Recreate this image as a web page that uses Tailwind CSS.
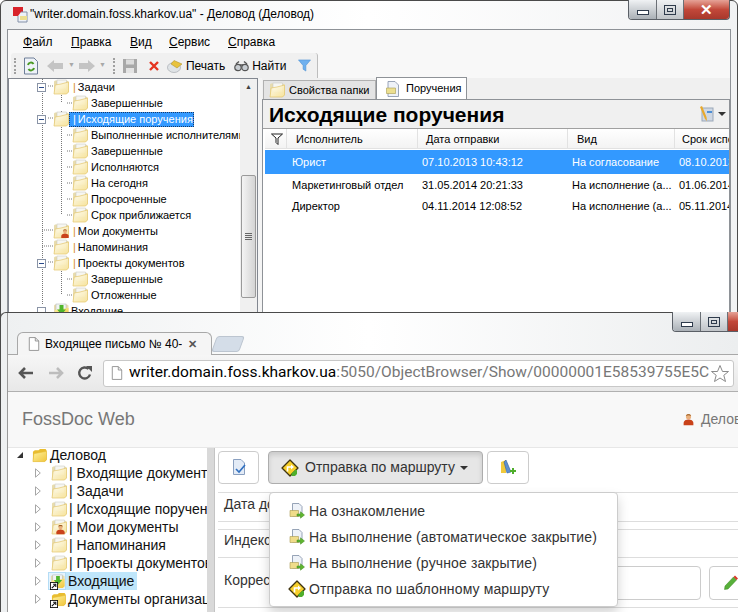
<!DOCTYPE html>
<html lang="ru">
<head>
<meta charset="UTF-8">
<title>Деловод</title>
<script src="https://cdn.jsdelivr.net/npm/@tailwindcss/browser@4"></script>
</head>
<body class="w-[738px] h-[612px] overflow-hidden relative bg-white font-['Liberation_Sans',sans-serif] text-black">

<svg width="0" height="0" class="absolute">
  <defs>
    <linearGradient id="fy" x1="0" y1="0" x2="1" y2="1"><stop offset="0" stop-color="#fff3a0"/><stop offset="1" stop-color="#f0c53c"/></linearGradient>
    <linearGradient id="fp" x1="0" y1="0" x2="1" y2="1"><stop offset="0" stop-color="#fffdf0"/><stop offset="1" stop-color="#f8e49a"/></linearGradient>
    <symbol id="folder" viewBox="0 0 16 16">
      <path d="M1 14.500V2.500L2 1.500H14L15.500 2.500V13L14 14.500Z" fill="#e8dcae"/>
      <rect x="4" y="1" width="9.500" height="9" fill="#f6f6f2" stroke="#c4c4bc" stroke-width=".5"/>
      <path d="M1 15L2.200 6L8 5L15.500 3V13L13.500 15Z" fill="url(#fp)" stroke="#e4c66a" stroke-width=".7" fill-opacity=".9"/>
    </symbol>
    <symbol id="folder-in" viewBox="0 0 16 16">
      <path d="M1 14.500V2.500L2 1.500H14L15.500 2.500V13L14 14.500Z" fill="#e8dcae"/>
      <rect x="3" y="1" width="10" height="9" fill="#f2f4f4" stroke="#a8b0b0" stroke-width=".5"/>
      <path d="M1 15L2.200 7L15.500 5V13L13.500 15Z" fill="url(#fy)"/>
      <path d="M6.500 2H10.500V6.500H13L8.500 11.500L4 6.500H6.500Z" fill="#4fb52c"/>
    </symbol>
    <symbol id="folder-solid" viewBox="0 0 16 16">
      <path d="M1 14.500V4L3 2.500H7L8.500 1H14.500L15.500 2.500V12.500L14 14.500Z" fill="#e9bd2f"/>
      <path d="M1 14.500L2 6L15.500 3.500V12.500L13.500 14.500Z" fill="url(#fy)" stroke="#e6bb34" stroke-width=".6"/>
    </symbol>
    <symbol id="person" viewBox="0 0 16 16">
      <circle cx="8" cy="4.500" r="3.200" fill="#eab07c"/>
      <path d="M4.800 3.500C5 1 11 1 11.200 3.500C9.500 2.500 6.500 2.500 4.800 3.500Z" fill="#9a5a1e"/>
      <path d="M2 15V12C2 9.500 5 8 8 8S14 9.500 14 12V15Z" fill="#c9421a"/>
    </symbol>
    <symbol id="route" viewBox="0 0 18 18">
      <path d="M9 1L17 9L9 17L1 9Z" fill="#f7cf2a" stroke="#3f3410" stroke-width="1.300" stroke-linejoin="round"/>
      <path d="M6.500 12.500V8H10.500" fill="none" stroke="#fff" stroke-width="1.600"/>
      <path d="M10 5.500L13 8L10 10.500Z" fill="#fff"/>
      <path d="M10.500 14.500L14.500 10.500L16 11.500V15L14 17H10.500Z" fill="#4fae2c"/>
    </symbol>
    <symbol id="send" viewBox="0 0 16 16">
      <path d="M3.500 .5H10L13 3.500V13H3.500Z" fill="#eef2f8" stroke="#7f8ea6" stroke-width=".8"/>
      <path d="M1 7.500H9.500V13.500H1Z" fill="#f0dc8a" stroke="#a8984e" stroke-width=".6"/>
      <path d="M8 11H11.500V8.800L15.500 12L11.500 15.200V13H8Z" fill="#5fb52f" stroke="#3f8a1c" stroke-width=".5"/>
    </symbol>
    <symbol id="page" viewBox="0 0 14 16">
      <path d="M1.500 .5H8.500L12.500 4.500V15.500H1.500ZM8.500 .5V4.500H12.500" fill="#fff" stroke="#8a8a8a" stroke-width="1"/>
    </symbol>
    <symbol id="funnel" viewBox="0 0 14 14">
      <path d="M.5 1H13.500L8.500 7V13L5.500 11V7Z" fill="#6fb0ee" stroke="#4a8fd4" stroke-width=".6"/>
    </symbol>
    <symbol id="shortcut" viewBox="0 0 9 9">
      <rect x=".5" y=".5" width="8" height="8" fill="#fff" stroke="#111" stroke-width="1"/>
      <path d="M2 7L5.500 3.500M3.500 2.500H6.500V5.500" fill="none" stroke="#111" stroke-width="1.200"/>
    </symbol>
    <symbol id="doc-small" viewBox="0 0 16 16">
      <path d="M3 .5H10L13.500 4V15.500H3Z" fill="#eef2f8" stroke="#8391a8" stroke-width=".8"/>
      <path d="M1.500 7H10.500V12.500H1.500Z" fill="#ecdf90" stroke="#a89c50" stroke-width=".6"/>
    </symbol>
    <symbol id="tri" viewBox="0 0 6 10">
      <path d="M.5 .8L5.300 5L.5 9.200Z" fill="#fff" stroke="#a6a6a6"/>
    </symbol>
  </defs>
</svg>

<!-- окно приложения -->
<div class="absolute left-0 top-0 w-[738px] h-[320px] rounded-t-md border border-[#4a4a4a] bg-gradient-to-r from-[#eef0f1] via-white to-[#f1f2f3] text-[11px]">
  <div class="h-[28px] flex items-center pl-[12px] gap-px text-[12px]">
    <svg width="16" height="16" viewBox="0 0 16 16"><rect x="0" y="0" width="10" height="9" fill="#d8232a"/><path d="M8 5H14V15H5V9" fill="#eef2f8" stroke="#8391a8"/><rect x="7" y="9" width="7" height="4" fill="#ecdf90"/></svg>
    <span class="-mt-[3px]">"writer.domain.foss.kharkov.ua" - Деловод (Деловод)</span>
  </div>
  <div class="absolute right-[7px] -top-px flex h-[20px] w-[102px] rounded-b-[4px] overflow-hidden border border-t-0 border-[#5a5f66]">
    <div class="w-[28px] flex items-center justify-center border-r border-[#6b7076] bg-gradient-to-b from-[#f0f2f4] to-[#aab0b6]"><div class="w-[12px] h-[5px] mt-[5px] border border-[#2f3b4c] bg-white"></div></div>
    <div class="w-[27px] flex items-center justify-center border-r border-[#6b7076] bg-gradient-to-b from-[#f0f2f4] to-[#c0c4c8]"><div class="w-[12px] h-[10px] border border-[#2f3b4c] flex items-center justify-center"><div class="w-[6px] h-[4px] border border-[#2f3b4c]"></div></div></div>
    <div class="flex-1 flex items-center justify-center bg-gradient-to-b from-[#e5a297] via-[#c2483a] to-[#a8382c] text-white text-[15px] font-bold leading-none">✕</div>
  </div>

  <div class="ml-[6px] mr-[6px] h-[290px] border border-[#8e9297] bg-white">
    <div class="bg-[#f8f8f8]">
      <div class="h-[23px] flex items-center text-[12px] pl-[15px] pt-px">
        <span class="w-[48px]"><u>Ф</u>айл</span>
        <span class="w-[59px]"><u>П</u>равка</span>
        <span class="w-[39px]"><u>В</u>ид</span>
        <span class="w-[59px]"><u>С</u>ервис</span>
        <span><u>С</u>правка</span>
      </div>
      <div class="h-[25px] flex items-center">
        <div class="ml-[3px] w-[307px] h-[25px] rounded-t-[3px] bg-[#f0f0f0] border-r border-[#bdbdbd] flex items-center text-[12px]">
          <div class="w-[3px] h-[16px] ml-[3px] border-l-2 border-dotted border-[#a0a0a0]"></div>
          <svg class="ml-[6px]" width="16" height="18" viewBox="0 0 16 18"><path d="M1.500 1H11L14.500 4.500V17H1.500Z" fill="#eef2f8" stroke="#6f7f98"/><path d="M5 8A3 3 0 0 1 10.500 7M11 11A3 3 0 0 1 5.500 12" fill="none" stroke="#4a9a24" stroke-width="2"/></svg>
          <svg class="ml-[7px] text-[#c4c4c4]" width="18" height="14" viewBox="0 0 18 14"><path d="M8 1V4H17V10H8V13L1 7Z" fill="currentColor"/></svg>
          <span class="ml-[4px] text-[#a8a8a8] text-[7px]">▼</span>
          <svg class="ml-[3px] text-[#c4c4c4]" width="18" height="14" viewBox="0 0 18 14"><path d="M10 1V4H1V10H10V13L17 7Z" fill="currentColor"/></svg>
          <span class="ml-[3px] text-[#a8a8a8] text-[7px]">▼</span>
          <div class="w-[3px] h-[16px] ml-[7px] border-l-2 border-dotted border-[#a0a0a0]"></div>
          <svg class="ml-[6px]" width="16" height="16" viewBox="0 0 16 16"><path d="M1 1H15V15H1Z" fill="#a8a8a8"/><rect x="4" y="1.500" width="8" height="5" fill="#dcdcdc"/><rect x="4" y="10" width="8" height="5" fill="#e4e4e4"/></svg>
          <svg class="ml-[10px]" width="12" height="12" viewBox="0 0 12 12"><path d="M2 2L10 10M10 2L2 10" stroke="#e5331f" stroke-width="2.400"/></svg>
          <svg class="ml-[7px]" width="16" height="14" viewBox="0 0 16 14"><ellipse cx="7" cy="8.500" rx="6.500" ry="5" fill="#dfe3e6" stroke="#9aa0a6" stroke-width=".6"/><path d="M4 5L7 1.500L15 5L10 9Z" fill="#e8c23c" stroke="#a88a20" stroke-width=".5"/></svg>
          <span class="ml-[3px]">Печать</span>
          <svg class="ml-[9px]" width="15" height="12" viewBox="0 0 15 12"><circle cx="4" cy="7.500" r="3.200" fill="#c8cdd2" stroke="#555" stroke-width="1.200"/><circle cx="11" cy="7.500" r="3.200" fill="#c8cdd2" stroke="#555" stroke-width="1.200"/><path d="M2 4L5 1.500M13 4L10 1.500M6 5H9" stroke="#555" stroke-width="1.400"/></svg>
          <span class="ml-[3px]">Найти</span>
          <svg class="ml-[12px]" width="13" height="13"><use href="#funnel"/></svg>
        </div>
      </div>
    </div>

    <div class="flex h-[240px] bg-[#f4f4f4]">
      <!-- дерево -->
      <div class="relative w-[250px] h-full border border-[#828790] bg-white flex">
        <svg class="absolute left-0 top-0" width="232" height="240">
          <path d="M33.500 0V225M52.500 16V24M52.500 32V135M52.500 192V216" stroke="#777" stroke-dasharray="1 1" fill="none"/>
          <path d="M39 7H44M39 39H44M39 183H44M33 151H44M33 167H44M58 24H64M58 56H64M58 72H64M58 88H64M58 104H64M58 120H64M58 136H64M58 200H64M58 216H64" stroke="#777" stroke-dasharray="1 1" fill="none"/>
        </svg>
        <div class="w-[232px] pl-[28px] overflow-hidden relative">
          <div class="h-[16px] flex items-center"><div class="w-[9px] h-[9px] border border-[#8a94a6] bg-white flex items-center justify-center"><div class="w-[5px] h-px bg-[#2a4a8a]"></div></div><svg class="ml-[7px]" width="16" height="16"><use href="#folder"/></svg><span class="ml-[4px] text-[#d98a2b]">|</span><span class="ml-[2px]">Задачи</span></div>
          <div class="h-[16px] flex items-center pl-[35px]"><svg width="16" height="16"><use href="#folder"/></svg><span class="ml-[3px]">Завершенные</span></div>
          <div class="h-[16px] flex items-center"><div class="w-[9px] h-[9px] border border-[#8a94a6] bg-white flex items-center justify-center"><div class="w-[5px] h-px bg-[#2a4a8a]"></div></div><svg class="ml-[7px]" width="16" height="16"><use href="#folder"/></svg><span class="bg-[#3399ff] text-white h-[15px] leading-[13px] w-[125px] pl-[3px] border border-dotted border-[#1a3a66] whitespace-nowrap"><span class="mr-[2px]">|</span>Исходящие поручения</span></div>
          <div class="h-[16px] flex items-center pl-[35px]"><svg class="shrink-0" width="16" height="16"><use href="#folder"/></svg><span class="ml-[3px] whitespace-nowrap">Выполненные исполнителями</span></div>
          <div class="h-[16px] flex items-center pl-[35px]"><svg width="16" height="16"><use href="#folder"/></svg><span class="ml-[3px]">Завершенные</span></div>
          <div class="h-[16px] flex items-center pl-[35px]"><svg width="16" height="16"><use href="#folder"/></svg><span class="ml-[3px]">Исполняются</span></div>
          <div class="h-[16px] flex items-center pl-[35px]"><svg width="16" height="16"><use href="#folder"/></svg><span class="ml-[3px]">На сегодня</span></div>
          <div class="h-[16px] flex items-center pl-[35px]"><svg width="16" height="16"><use href="#folder"/></svg><span class="ml-[3px]">Просроченные</span></div>
          <div class="h-[16px] flex items-center pl-[35px]"><svg width="16" height="16"><use href="#folder"/></svg><span class="ml-[3px]">Срок приближается</span></div>
          <div class="h-[16px] flex items-center pl-[16px] relative"><svg width="16" height="16"><use href="#folder"/></svg><svg class="absolute left-[23px] top-[5px]" width="10" height="11"><use href="#person"/></svg><span class="ml-[4px] text-[#d98a2b]">|</span><span class="ml-[2px]">Мои документы</span></div>
          <div class="h-[16px] flex items-center pl-[16px]"><svg width="16" height="16"><use href="#folder"/></svg><span class="ml-[4px] text-[#d98a2b]">|</span><span class="ml-[2px]">Напоминания</span></div>
          <div class="h-[16px] flex items-center"><div class="w-[9px] h-[9px] border border-[#8a94a6] bg-white flex items-center justify-center"><div class="w-[5px] h-px bg-[#2a4a8a]"></div></div><svg class="ml-[7px]" width="16" height="16"><use href="#folder"/></svg><span class="ml-[4px] text-[#d98a2b]">|</span><span class="ml-[2px]">Проекты документов</span></div>
          <div class="h-[16px] flex items-center pl-[35px]"><svg width="16" height="16"><use href="#folder"/></svg><span class="ml-[3px]">Завершенные</span></div>
          <div class="h-[16px] flex items-center pl-[35px]"><svg width="16" height="16"><use href="#folder"/></svg><span class="ml-[3px]">Отложенные</span></div>
          <div class="h-[16px] flex items-center"><div class="w-[9px] h-[9px] border border-[#8a94a6] bg-white"></div><svg class="ml-[7px]" width="16" height="16"><use href="#folder-in"/></svg><span class="ml-[2px]">Входящие</span></div>
        </div>
        <div class="w-[17px] bg-[#f0f0f0] flex flex-col items-center">
          <div class="h-[16px] text-[7px] leading-[16px] text-[#404040]">▲</div>
          <div class="mt-[80px] w-[15px] h-[123px] rounded-[2px] border border-[#9a9a9a] bg-gradient-to-r from-[#f4f4f4] to-[#d4d4d4] flex flex-col gap-px items-center justify-center">
            <div class="w-[7px] h-px bg-[#666]"></div><div class="w-[7px] h-px bg-[#666]"></div><div class="w-[7px] h-px bg-[#666]"></div><div class="w-[7px] h-px bg-[#666]"></div>
          </div>
        </div>
      </div>

      <!-- вкладки -->
      <div class="ml-[4px] w-[468px] flex flex-col">
        <div class="h-[21px] flex items-end bg-[#f0f0f0] pl-[1px]">
          <div class="w-[113px] h-[19px] bg-[#e4e4e4] border border-b-0 border-[#b0b0b0] flex items-center pl-[5px] gap-[4px]">
            <svg width="16" height="16"><use href="#folder"/></svg><span class="whitespace-nowrap">Свойства папки</span>
          </div>
          <div class="w-[91px] h-[22px] bg-white border border-b-0 border-[#8e9297] flex items-center pl-[8px] gap-[5px]">
            <svg width="16" height="16"><use href="#doc-small"/></svg><span>Поручения</span>
          </div>
        </div>
        <div class="flex-1 border border-[#8e9297] bg-white overflow-hidden">
          <div class="h-[29px] bg-[#f0f0f0] border-b border-[#a0a0a0] flex items-center pl-[6px] pr-[3px] justify-between">
            <span class="font-bold text-[21px] leading-none">Исходящие поручения</span>
            <div class="flex items-center gap-[4px]">
              <svg width="16" height="16" viewBox="0 0 16 16"><rect x="4" y="2" width="11" height="13" fill="#cfd8e4" stroke="#9aa7b8"/><path d="M2 1L7 13L9 15L8.500 11L4 0Z" fill="#e8a92c"/><rect x="9" y="5" width="5" height="2" fill="#4d8fd6"/></svg>
              <span class="w-0 h-0 border-x-[4px] border-x-transparent border-t-[4px] border-t-[#333]"></span>
            </div>
          </div>
          <div class="ml-[2px] h-[20px] flex items-center bg-gradient-to-b from-white to-[#f3f3f3] border-b border-[#e2e2e2] whitespace-nowrap overflow-hidden">
            <div class="w-[22px] pl-[6px] shrink-0 border-r border-[#e2e2e2] h-full flex items-center"><svg width="12" height="12" viewBox="0 0 12 12"><path d="M.5 1H11.500L7 5V11.500L5 9.500V5Z" fill="#fff" stroke="#222"/></svg></div>
            <div class="w-[131px] pl-[9px] shrink-0 border-r border-[#e2e2e2] h-full leading-[20px]">Исполнитель</div>
            <div class="w-[150px] pl-[8px] shrink-0 border-r border-[#e2e2e2] h-full leading-[20px]">Дата отправки</div>
            <div class="w-[107px] pl-[9px] shrink-0 border-r border-[#e2e2e2] h-full leading-[20px]">Вид</div>
            <div class="pl-[7px] shrink-0 h-full leading-[20px]">Срок исполнения</div>
          </div>
          <div class="ml-[2px] mt-px h-[24px] flex items-center bg-[#3399ff] text-white whitespace-nowrap overflow-hidden">
            <div class="w-[153px] pl-[27px] shrink-0">Юрист</div><div class="w-[150px] pl-[4px] shrink-0">07.10.2013 10:43:12</div><div class="w-[107px] pl-[4px] shrink-0">На согласование</div><div class="pl-[4px] shrink-0">08.10.2013</div>
          </div>
          <div class="ml-[2px] h-[22px] flex items-center whitespace-nowrap overflow-hidden">
            <div class="w-[153px] pl-[27px] shrink-0">Маркетинговый отдел</div><div class="w-[150px] pl-[4px] shrink-0">31.05.2014 20:21:33</div><div class="w-[107px] pl-[4px] shrink-0">На исполнение (а...</div><div class="pl-[4px] shrink-0">01.06.2014</div>
          </div>
          <div class="ml-[2px] h-[20px] flex items-center whitespace-nowrap overflow-hidden">
            <div class="w-[153px] pl-[27px] shrink-0">Директор</div><div class="w-[150px] pl-[4px] shrink-0">04.11.2014 12:08:52</div><div class="w-[107px] pl-[4px] shrink-0">На исполнение (а...</div><div class="pl-[4px] shrink-0">05.11.2014</div>
          </div>
        </div>
      </div>
    </div>
  </div>
</div>

<!-- окно браузера -->
<div class="absolute left-0 top-[312px] w-[738px] h-[300px] rounded-t-md border-t border-l border-[#4a4a4a] bg-gradient-to-r from-[#eef0f1] via-white to-[#eceeef]">
  <div class="absolute right-0 -top-px flex h-[20px] w-[66px] rounded-bl-[4px] overflow-hidden border-b border-l border-[#5a5f66]">
    <div class="w-[28px] flex items-center justify-center border-r border-[#6b7076] bg-gradient-to-b from-[#f0f2f4] to-[#aab0b6]"><div class="w-[12px] h-[5px] mt-[5px] border border-[#2f3b4c] bg-white"></div></div>
    <div class="w-[27px] flex items-center justify-center border-r border-[#6b7076] bg-gradient-to-b from-[#f0f2f4] to-[#c0c4c8]"><div class="w-[12px] h-[10px] border border-[#2f3b4c] flex items-center justify-center"><div class="w-[6px] h-[4px] border border-[#2f3b4c]"></div></div></div>
    <div class="flex-1 bg-gradient-to-b from-[#e5a297] via-[#c2483a] to-[#a8382c]"></div>
  </div>

  <div class="ml-[6px] h-[299px] flex flex-col border-l border-[#9a9a9a]">
    <!-- полоска вкладок -->
    <div class="h-[42px] flex items-end pl-[9px] border-b border-[#a8a8a8] relative z-0">
      <div class="w-[195px] h-[23px] -mb-px bg-[#f5f5f5] border border-b-0 border-[#a8a8a8] rounded-t-[6px] flex items-center pl-[10px] text-[12px] relative z-10">
        <svg width="12" height="14"><use href="#page"/></svg>
        <span class="ml-[5px] w-[137px] overflow-hidden whitespace-nowrap">Входящее письмо № 40-1</span>
        <span class="ml-[6px] text-[#555] font-bold text-[11px]">✕</span>
      </div>
      <div class="ml-[2px] w-[28px] h-[16px] mb-[2px] rounded-[3px] bg-[#d4dde8] border border-[#bcc5d0] -skew-x-[20deg]"></div>
    </div>
    <!-- адресная строка -->
    <div class="h-[37px] flex items-center bg-gradient-to-b from-[#f6f6f6] to-[#e8e8e8] border-b border-[#b0b0b0]">
      <svg class="ml-[10px]" width="16" height="14" viewBox="0 0 16 14"><path d="M7 2L2 7L7 12M2.500 7H15" fill="none" stroke="#555" stroke-width="2.600"/></svg>
      <svg class="ml-[14px]" width="16" height="14" viewBox="0 0 16 14"><path d="M9 2L14 7L9 12M13.500 7H1" fill="none" stroke="#bdbdbd" stroke-width="2.600"/></svg>
      <svg class="ml-[13px]" width="16" height="16" viewBox="0 0 16 16"><path d="M13 9.500A5.500 5.500 0 1 1 11.500 4" fill="none" stroke="#555" stroke-width="2.400"/><path d="M9 1H15V7Z" fill="#555"/></svg>
      <div class="ml-[10px] w-[631px] h-[27px] bg-white border border-[#c8c8c8] rounded-[3px] flex items-center pl-[7px] pr-[3px] text-[15.5px] font-['Roboto',sans-serif]">
        <svg class="shrink-0" width="12" height="14"><use href="#page"/></svg>
        <span class="ml-[6px] w-[582px] overflow-hidden whitespace-nowrap text-[#777]"><span class="text-black">writer.domain.foss.kharkov.ua</span>:5050/ObjectBrowser/Show/00000001E58539755E5C</span>
        <svg class="shrink-0" width="20" height="19" viewBox="0 0 20 19"><path d="M10 1.500L12.500 7.500H18.500L13.800 11.300L15.500 17.500L10 14L4.500 17.500L6.200 11.300L1.500 7.500H7.500Z" fill="#fff" stroke="#8a8a8a"/></svg>
      </div>
    </div>
    <!-- шапка сайта -->
    <div class="h-[56px] bg-[#f8f8f8] border-b border-[#e7e7e7] flex items-center justify-between pl-[14px] font-['Liberation_Sans',sans-serif]">
      <span class="text-[18px] text-[#777]">FossDoc Web</span>
      <div class="flex items-center gap-[6px] text-[14px] text-[#777] w-[56px] overflow-hidden whitespace-nowrap shrink-0">
        <svg class="shrink-0" width="13" height="15"><use href="#person"/></svg><span>Деловод</span>
      </div>
    </div>
    <!-- тело -->
    <div class="flex-1 flex bg-white text-[14px] overflow-hidden">
      <div class="w-[199px] shrink-0 pl-[9px] overflow-hidden whitespace-nowrap text-[#111]">
        <div class="h-[18px] -mt-[2px] flex items-center"><span class="w-0 h-0 border-l-[6px] border-l-transparent border-b-[6px] border-b-[#333]"></span><svg class="ml-[9px]" width="15" height="15"><use href="#folder-solid"/></svg><span class="ml-[3px]">Деловод</span></div>
        <div class="h-[18px] flex items-center pl-[18px]"><svg class="shrink-0" width="6" height="10"><use href="#tri"/></svg><svg class="ml-[10px] shrink-0" width="16" height="16"><use href="#folder"/></svg><span class="ml-[2px]">| Входящие документы</span></div>
        <div class="h-[18px] flex items-center pl-[18px]"><svg class="shrink-0" width="6" height="10"><use href="#tri"/></svg><svg class="ml-[10px] shrink-0" width="16" height="16"><use href="#folder"/></svg><span class="ml-[2px]">| Задачи</span></div>
        <div class="h-[18px] flex items-center pl-[18px]"><svg class="shrink-0" width="6" height="10"><use href="#tri"/></svg><svg class="ml-[10px] shrink-0" width="16" height="16"><use href="#folder"/></svg><span class="ml-[2px]">| Исходящие поручения</span></div>
        <div class="h-[18px] flex items-center pl-[18px] relative"><svg class="shrink-0" width="6" height="10"><use href="#tri"/></svg><svg class="ml-[10px] shrink-0" width="16" height="16"><use href="#folder"/></svg><svg class="absolute left-[38px] top-[6px]" width="11" height="11"><use href="#person"/></svg><span class="ml-[2px]">| Мои документы</span></div>
        <div class="h-[18px] flex items-center pl-[18px]"><svg class="shrink-0" width="6" height="10"><use href="#tri"/></svg><svg class="ml-[10px] shrink-0" width="16" height="16"><use href="#folder"/></svg><span class="ml-[2px]">| Напоминания</span></div>
        <div class="h-[18px] flex items-center pl-[18px]"><svg class="shrink-0" width="6" height="10"><use href="#tri"/></svg><svg class="ml-[10px] shrink-0" width="16" height="16"><use href="#folder"/></svg><span class="ml-[2px]">| Проекты документов</span></div>
        <div class="h-[18px] flex items-center pl-[18px] relative"><svg class="shrink-0" width="6" height="10"><use href="#tri"/></svg><span class="ml-[7px] w-[18px] h-[18px] flex items-center justify-center bg-[#e4f3fd] border border-[#b4dcf5]"><svg width="15" height="15"><use href="#folder-in"/></svg></span><span class="bg-[#bfe6fb] pl-[2px] pr-[3px] h-[18px] leading-[18px]">Входящие</span><svg class="absolute left-[33px] bottom-0" width="8" height="8"><use href="#shortcut"/></svg></div>
        <div class="h-[18px] flex items-center pl-[18px] relative"><svg class="shrink-0" width="6" height="10"><use href="#tri"/></svg><svg class="ml-[10px] shrink-0" width="15" height="15"><use href="#folder-solid"/></svg><span class="ml-[2px]">Документы организации</span><svg class="absolute left-[33px] bottom-0" width="8" height="8"><use href="#shortcut"/></svg></div>
      </div>
      <div class="w-[8px] shrink-0 bg-[#d9d9d9] border-r border-[#c4c4c4]"></div>
      <div class="flex-1 relative pl-[3px]">
        <div class="flex items-center h-[45px] border-b border-[#ddd] pt-px pb-[6px]">
          <div class="w-[41px] h-[33px] rounded-[4px] border border-[#ccc] flex items-center justify-center"><svg width="16" height="17" viewBox="0 0 16 17"><path d="M2.500 .5H10L13.500 4V15.500H2.500Z" fill="#e3ebf6" stroke="#8aa0c0"/><path d="M5 10L8 13L14 6" fill="none" stroke="#2f6fc0" stroke-width="1.600"/></svg></div>
          <div class="ml-[9px] w-[215px] h-[33px] rounded-[4px] border border-[#adadad] bg-[#e6e6e6] shadow-[inset_0_3px_5px_rgba(0,0,0,0.125)] flex items-center pl-[12px] text-[#333] whitespace-nowrap">
            <svg width="18" height="18"><use href="#route"/></svg><span class="ml-[6px]">Отправка по маршруту</span><span class="ml-[5px] w-0 h-0 border-x-[4px] border-x-transparent border-t-[4px] border-t-[#333]"></span>
          </div>
          <div class="ml-[4px] w-[42px] h-[33px] rounded-[4px] border border-[#ccc] flex items-center justify-center"><svg width="16" height="17" viewBox="0 0 16 17"><path d="M1 14V3L6 1V14Z" fill="#f0c93c"/><path d="M6 1L11 13L7 14L4 3Z" fill="#5f8fd0" stroke="#2e5f9e" stroke-width=".6"/><path d="M10 11H12V9H14V11H16V13H14V15H12V13H10Z" fill="#4fae2c"/></svg></div>
        </div>
        <div class="h-[29px] flex items-center pb-[5px] pl-[6px] text-[#333] whitespace-nowrap border-b border-[#ddd]">Дата документа</div>
        <div class="h-[8px] border-b border-[#ddd]"></div>
        <div class="h-[28px] flex items-center pb-[6px] pl-[6px] text-[#333] border-b border-[#ddd] whitespace-nowrap">Индекс</div>
        <div class="h-[50px] flex items-center pl-[6px] text-[#333] border-b border-[#ddd] whitespace-nowrap">
          <span class="w-[204px] pb-[4px]">Корреспондент</span>
          <div class="w-[281px] h-[34px] border border-[#ccc] rounded-[4px] ml-[-8px]"></div>
          <div class="ml-[8px] w-[40px] h-[34px] border border-[#ccc] rounded-[4px] flex items-center pl-[14px]"><svg width="14" height="15" viewBox="0 0 14 15"><path d="M9.500 2L12.500 5L4 14L.5 14.500L1 11Z" fill="#58b03a" stroke="#3a8a22" stroke-width=".5"/><path d="M9.500 2L11 .5L14 3.500L12.500 5Z" fill="#d8382a"/></svg></div>
        </div>

        <!-- выпадающее меню -->
        <div class="absolute left-[54px] top-[44px] w-[349px] h-[115px] bg-white border border-[#ccc] rounded-[4px] shadow-[0_6px_12px_rgba(0,0,0,0.175)] py-[5px] text-[#333] whitespace-nowrap tracking-[0.13px]">
          <div class="h-[26px] flex items-center pl-[19px] gap-[4px]"><svg width="16" height="16"><use href="#send"/></svg>На ознакомление</div>
          <div class="h-[26px] flex items-center pl-[19px] gap-[4px]"><svg width="16" height="16"><use href="#send"/></svg>На выполнение (автоматическое закрытие)</div>
          <div class="h-[26px] flex items-center pl-[19px] gap-[4px]"><svg width="16" height="16"><use href="#send"/></svg>На выполнение (ручное закрытие)</div>
          <div class="h-[26px] flex items-center pl-[18px] gap-[3px]"><svg width="18" height="18"><use href="#route"/></svg>Отправка по шаблонному маршруту</div>
        </div>
      </div>
    </div>
  </div>
</div>
</body>
</html>
